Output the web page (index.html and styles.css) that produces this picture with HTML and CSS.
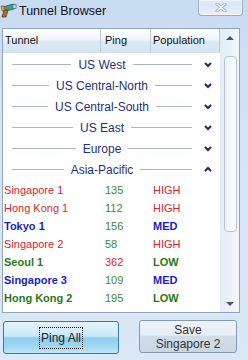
FILE: index.html
```html
<!DOCTYPE html>
<html lang="en">
<head>
    <meta charset="UTF-8">
    <title>Tunnel Browser</title>
    <link rel="stylesheet" href="styles.css">
</head>
<body>
    <div class="window">
        <div class="titlebar">
            <svg class="app-icon" width="17" height="16" viewBox="0 0 17 16">
                <path d="M3 5 L13 2 L15 4 L14 7 L6 9 Z" fill="#3aa08c" stroke="#1d5e55" stroke-width="0.8"/>
                <rect x="13" y="2.5" width="3" height="4" fill="#c9e6de" stroke="#1d5e55" stroke-width="0.6"/>
                <path d="M4 8 L8 8 L6 15 L2 15 Z" fill="#b0702a" stroke="#5a3410" stroke-width="0.8"/>
                <path d="M1 4 L4 4 L5 8 L2 9 Z" fill="#e0a030" stroke="#6b4a10" stroke-width="0.6"/>
            </svg>
            <span class="title">Tunnel Browser</span>
            <div class="close-btn">
                <svg width="12" height="9" viewBox="0 0 12 9">
                    <path d="M2 1 L10 8 M10 1 L2 8" stroke="#9aa8bb" stroke-width="3" stroke-linecap="round"/>
                    <path d="M2 1 L10 8 M10 1 L2 8" stroke="#ffffff" stroke-width="1.4" stroke-linecap="round"/>
                </svg>
            </div>
        </div>

        <div class="listbox">
            <div class="list-main">
                <div class="list-head">
                    <div class="head-cell">Tunnel</div>
                    <div class="head-cell ping">Ping</div>
                    <div class="head-cell">Population</div>
                </div>

                <div class="groups" id="groups"></div>
                <div class="rows" id="rows"></div>
            </div>
            <div class="scrollbar">
                <div class="sb-arrow up"></div>
                <div class="sb-track">
                    <div class="sb-thumb"></div>
                </div>
                <div class="sb-arrow down"></div>
            </div>
        </div>

        <div class="buttons">
            <button class="button ping-all"><span class="focus-text">Ping All</span></button>
            <button class="button save">Save<br>Singapore 2</button>
        </div>
    </div>

    <script>
        // region headers
        const groups = [
            { name: 'US West', open: false },
            { name: 'US Central-North', open: false },
            { name: 'US Central-South', open: false },
            { name: 'US East', open: false },
            { name: 'Europe', open: false },
            { name: 'Asia-Pacific', open: true }
        ];
        const groupBox = document.getElementById('groups');
        groups.forEach(g => {
            const row = document.createElement('div');
            row.className = 'group';
            const chevron = g.open ? 'M1 5 L4 2 L7 5' : 'M1 2 L4 5 L7 2';
            row.innerHTML =
                '<span class="line"></span>' +
                '<span class="group-name">' + g.name + '</span>' +
                '<span class="line"></span>' +
                '<svg class="chevron" width="8" height="7" viewBox="0 0 8 7"><path d="' + chevron + '" fill="none" stroke="#1b2a66" stroke-width="2"/></svg>';
            groupBox.appendChild(row);
        });

        // tunnels in Asia-Pacific
        const tunnels = [
            { name: 'Singapore 1', ping: 135, pop: 'HIGH' },
            { name: 'Hong Kong 1', ping: 112, pop: 'HIGH' },
            { name: 'Tokyo 1', ping: 156, pop: 'MED' },
            { name: 'Singapore 2', ping: 58, pop: 'HIGH' },
            { name: 'Seoul 1', ping: 362, pop: 'LOW' },
            { name: 'Singapore 3', ping: 109, pop: 'MED' },
            { name: 'Hong Kong 2', ping: 195, pop: 'LOW' }
        ];
        const rowBox = document.getElementById('rows');
        tunnels.forEach(t => {
            const row = document.createElement('div');
            row.className = 'row pop-' + t.pop.toLowerCase();
            const pingClass = t.ping > 300 ? 'ping-bad' : 'ping-good';
            row.innerHTML =
                '<span class="name">' + t.name + '</span>' +
                '<span class="ping ' + pingClass + '">' + t.ping + '</span>' +
                '<span class="pop">' + t.pop + '</span>';
            rowBox.appendChild(row);
        });
    </script>
</body>
</html>
```

FILE: styles.css
```css
body {
    margin: 0;
    font-family: 'Liberation Sans', Arial, sans-serif;
}
.window {
    width: 248px;
    height: 360px;
    background: linear-gradient(#c7dbf1, #d6e5f5 40%, #dbe8f6);
    display: flex;
    flex-direction: column;
    overflow: hidden;
}
.titlebar {
    height: 21px;
    display: flex;
    align-items: flex-start;
    margin-bottom: 7px;
}
.app-icon {
    margin: 2px 2px 0 0;
}
.title {
    font-size: 12.5px;
    color: #111;
    margin-top: 4px;
}
.close-btn {
    margin-left: auto;
    margin-right: 5px;
    width: 43px;
    height: 15px;
    border: 1px solid #9aadc5;
    border-top: none;
    border-radius: 0 0 4px 4px;
    background: linear-gradient(#d9e6f4, #e6eef8);
    box-shadow: inset 0 0 0 1px rgba(255,255,255,0.6);
    display: flex;
    align-items: center;
    justify-content: center;
}
.listbox {
    margin-left: 2px;
    width: 236px;
    height: 283px;
    border: 1px solid #8fa4bf;
    background: #fff;
    display: flex;
}
.list-main {
    flex: 1;
    display: flex;
    flex-direction: column;
}
.list-head {
    display: grid;
    grid-template-columns: 98px 50px 1fr;
    height: 23px;
    background: linear-gradient(#ffffff, #f1f6fb 45%, #dde9f5 55%, #d6e4f2);
    border-bottom: 1px solid #d5dfea;
    font-size: 11px;
    color: #111;
}
.head-cell {
    padding-left: 2px;
    line-height: 23px;
    border-right: 1px solid #b9cade;
}
.head-cell.ping {
    padding-left: 4px;
}
.groups {
    padding-top: 1px;
}
.group {
    height: 21px;
    display: flex;
    align-items: center;
    padding-left: 9px;
    font-size: 12px;
    color: #1f2f80;
}
.group .line {
    flex: 1;
    height: 1px;
    background: #a9b5c8;
}
.group-name {
    padding: 0 7px;
}
.chevron {
    margin: 0 8px 0 12px;
}
.rows {
    padding-top: 1px;
}
.row {
    display: grid;
    grid-template-columns: 98px 50px 1fr;
    height: 18px;
    line-height: 18px;
    font-size: 11px;
}
.row .name {
    padding-left: 1px;
}
.row .ping {
    padding-left: 4px;
}
.row .pop {
    padding-left: 2px;
}
.ping-good {
    color: #3b8a2a;
}
.ping-bad {
    color: #dc2430;
}
.pop-high .name, .pop-high .pop {
    color: #dc2430;
}
.pop-med .name, .pop-med .pop {
    color: #1c1ccc;
    font-weight: bold;
}
.pop-low .name, .pop-low .pop {
    color: #2b7a12;
    font-weight: bold;
}
.scrollbar {
    width: 18px;
    background: linear-gradient(90deg, #e4ecf5, #f3f7fb);
    border-left: 1px solid #e1e9f2;
    display: flex;
    flex-direction: column;
}
.sb-arrow {
    height: 17px;
    display: flex;
    align-items: center;
    justify-content: center;
}
.sb-arrow.up::before {
    content: '';
    border: 4px solid transparent;
    border-bottom: 4px solid #4d5765;
    border-top: none;
}
.sb-arrow.down::before {
    content: '';
    border: 4px solid transparent;
    border-top: 4px solid #4d5765;
    border-bottom: none;
}
.sb-track {
    flex: 1;
    padding: 10px 2px 0 3px;
}
.sb-thumb {
    height: 174px;
    border: 1px solid #b5c3d4;
    border-radius: 4px;
    background: linear-gradient(90deg, #eef3f9, #fbfdff);
}
.buttons {
    display: flex;
    justify-content: space-between;
    align-items: flex-start;
    padding: 7px 11px 0 3px;
}
.button {
    font-family: 'Liberation Sans', Arial, sans-serif;
    font-size: 12px;
    color: #222;
    border-radius: 3px;
    padding: 0;
    cursor: pointer;
}
.ping-all {
    width: 116px;
    height: 33px;
    margin-top: 1px;
    border: 1px solid #3c78a8;
    background: linear-gradient(#e3f3fc, #cbe9f9 45%, #8fcdef 52%, #a2d8f3 80%, #bde6f8);
    display: flex;
    align-items: center;
    justify-content: center;
}
.focus-text {
    outline: 1px dotted #000;
    padding: 3px 1px;
}
.save {
    width: 98px;
    height: 33px;
    border: 1px solid #8599b1;
    background: linear-gradient(#eef3f8, #e5edf5 45%, #d0dde9 50%, #c9d7e5);
    line-height: 14px;
    color: #333;
}
```
